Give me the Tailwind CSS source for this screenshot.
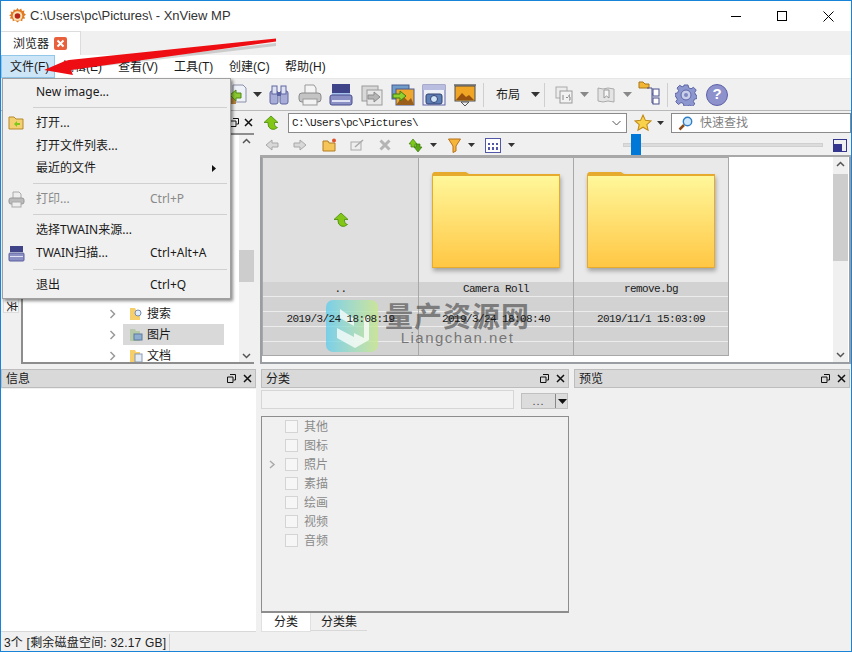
<!DOCTYPE html>
<html lang="zh-CN">
<head>
    <meta charset="UTF-8">
    <title>XnView MP</title>
    <script src="https://cdn.jsdelivr.net/npm/@tailwindcss/browser@4"></script>
</head>
<body class="bg-white overflow-hidden">
<div class="relative w-[852px] h-[652px] overflow-hidden border border-[#1883d7] bg-[#f0f0f0] text-[12px] text-[#1a1a1a] flex flex-col font-['Liberation_Sans','Noto_Sans_CJK_SC',sans-serif]">

    <!-- Title bar -->
    <div class="h-[30px] shrink-0 bg-white flex items-center pl-[8px]">
        <svg class="w-[17px] h-[17px]" viewBox="0 0 17 17"><path d="M8.500 0l1.500 2 2.200-1.500.8 2.400 2.400-.3-.5 2.400 2 1.500-1.800 1.700 1 2.200-2.500.3-.4 2.500-2.300-.9-2.400 2.200-2.400-2.200-2.300.9-.4-2.500-2.500-.3 1-2.200L.1 7.500l2-1.500-.5-2.400 2.400.3.800-2.400L7 2z" fill="#e07a24"/><circle cx="8.500" cy="8" r="4.800" fill="#fbe3b4"/><circle cx="8.500" cy="8" r="2.800" fill="#b8241a"/></svg>
        <span class="ml-[4px] text-[13px] text-[#333]">C:\Users\pc\Pictures\ - XnView MP</span>
        <div class="ml-auto flex items-center">
            <div class="w-[46px] flex justify-center"><div class="w-[10px] h-px bg-black"></div></div>
            <div class="w-[46px] flex justify-center"><div class="w-[10px] h-[10px] border border-black"></div></div>
            <div class="w-[46px] flex justify-center"><svg class="w-[11px] h-[11px]" viewBox="0 0 11 11"><path d="M.5.500l10 10M10.500.500l-10 10" stroke="#000" fill="none"/></svg></div>
        </div>
    </div>

    <!-- Tabs -->
    <div class="h-[24px] shrink-0 flex">
        <div class="w-[80px] bg-white border-t border-r border-[#dcdcdc] flex items-center pl-[12px] gap-[5px]">
            <span class="text-[12px]">浏览器</span>
            <div class="w-[13px] h-[13px] rounded-[2px] bg-[#e8603c] flex items-center justify-center">
                <svg class="w-[9px] h-[9px]" viewBox="0 0 9 9"><path d="M1.500 1.500l6 6M7.500 1.500l-6 6" stroke="#fff" stroke-width="2" fill="none"/></svg>
            </div>
        </div>
    </div>

    <!-- Menu bar -->
    <div class="h-[23px] shrink-0 bg-white flex items-center text-[12px] whitespace-nowrap">
        <div class="w-[54px] h-full bg-[#cde6f7] border border-[#92c7ea] flex items-center pl-[8px]">文件(F)</div>
        <div class="flex ml-[7px]">
            <span class="w-[56px]">编辑(E)</span>
            <span class="w-[56px]">查看(V)</span>
            <span class="w-[55px]">工具(T)</span>
            <span class="w-[56px]">创建(C)</span>
            <span>帮助(H)</span>
        </div>
    </div>

    <!-- Main toolbar -->
    <div class="h-[33px] shrink-0 border-t border-[#e6e6e6] border-b border-b-[#b8b8b8] flex items-center pl-[223px]">
        <svg class="w-[24px] h-[24px]" viewBox="0 0 24 24"><path d="M9 2h10l3 3v14H9z" fill="#eef1f7" stroke="#8a8fa8"/><path d="M1 16l11-3v8H1z" fill="#b7843f"/><path d="M6 12l6-5v3h5v5h-5v3z" fill="#8cc832" stroke="#4f8a12"/></svg>
        <svg class="ml-[5px] w-[9px] h-[5px]" viewBox="0 0 9 5"><path d="M0 0h9L4.500 5z" fill="#333"/></svg>
        <svg class="ml-[5px] w-[24px] h-[24px]" viewBox="0 0 24 24"><rect x="3" y="8" width="8" height="13" rx="2" fill="#a7add6" stroke="#5f65a0"/><rect x="13" y="8" width="8" height="13" rx="2" fill="#a7add6" stroke="#5f65a0"/><rect x="5" y="3" width="5" height="8" fill="#dfe2f2" stroke="#5f65a0"/><rect x="14" y="3" width="5" height="8" fill="#dfe2f2" stroke="#5f65a0"/><rect x="10" y="9" width="4" height="4" fill="#5b62a0"/></svg>
        <svg class="ml-[7px] w-[24px] h-[24px]" viewBox="0 0 24 24"><path d="M7 2h9l2 3v6H7z" fill="#f4f4f4" stroke="#999"/><rect x="1" y="10" width="22" height="9" rx="3" fill="#c4c4c4" stroke="#8a8a8a"/><rect x="5" y="16" width="14" height="6" fill="#f2f2f2" stroke="#999"/></svg>
        <svg class="ml-[7px] w-[24px] h-[24px]" viewBox="0 0 24 24"><path d="M3 1h18v9H3z" fill="#3f4488"/><path d="M3 10h18v2H3z" fill="#a6c3ee"/><rect x="1" y="12" width="22" height="10" rx="2" fill="#8a90c4" stroke="#474c8c"/><rect x="3" y="17" width="18" height="2" fill="#dfe2f4"/></svg>
        <svg class="ml-[7px] w-[24px] h-[24px]" viewBox="0 0 24 24"><rect x="2" y="3" width="16" height="15" fill="#d8d8d8" stroke="#9a9a9a"/><rect x="7" y="7" width="15" height="15" fill="#e8e8e8" stroke="#9a9a9a"/><path d="M8 12h6V9l6 5-6 5v-3H8z" fill="#b5b5b5" stroke="#8c8c8c"/></svg>
        <svg class="ml-[7px] w-[24px] h-[24px]" viewBox="0 0 24 24"><rect x="1" y="2" width="17" height="14" fill="#6f9cc8" stroke="#4a5a90"/><rect x="5" y="6" width="18" height="16" fill="#f0a82c" stroke="#4a5a90"/><path d="M5 22l7-9 5 5 3-3 3 7z" fill="#9a5f1a"/><path d="M2 11h7V8l6 5-6 5v-3H2z" fill="#8fd12f" stroke="#437c10"/></svg>
        <svg class="ml-[7px] w-[24px] h-[24px]" viewBox="0 0 24 24"><rect x="1" y="2" width="22" height="20" fill="#eef0f8" stroke="#6065a8"/><rect x="1" y="2" width="22" height="5" fill="#b9bde0"/><rect x="4" y="11" width="16" height="10" rx="2" fill="#5c7fb8" stroke="#34406f"/><circle cx="12" cy="16" r="3.500" fill="#cfe3f7" stroke="#34406f"/></svg>
        <svg class="ml-[7px] w-[24px] h-[24px]" viewBox="0 0 24 24"><rect x="1" y="1" width="22" height="2" fill="#8a8a8a"/><rect x="2" y="3" width="20" height="15" fill="#f0a525" stroke="#4f4f4f"/><path d="M3 17l6-7 4 4 3-2 5 5z" fill="#99510f"/><path d="M8 19h8l-4 4z" fill="none" stroke="#555"/></svg>
        <div class="ml-[6px] w-px h-[24px] bg-[#cfcfcf]"></div>
        <span class="ml-[12px] text-[12px]">布局</span>
        <svg class="ml-[11px] w-[9px] h-[5px]" viewBox="0 0 9 5"><path d="M0 0h9L4.500 5z" fill="#333"/></svg>
        <div class="ml-[4px] w-px h-[24px] bg-[#cfcfcf]"></div>
        <svg class="ml-[10px] w-[18px] h-[18px]" viewBox="0 0 18 18"><rect x="1" y="1" width="11" height="11" fill="#ececec" stroke="#aaa"/><rect x="5" y="5" width="12" height="12" fill="#f2f2f2" stroke="#999"/><path d="M8 9v5M11 11.500h2M15 9h-1v2h1v3h-1" stroke="#888" fill="none"/></svg>
        <svg class="ml-[7px] w-[9px] h-[5px]" viewBox="0 0 9 5"><path d="M0 0h9L4.500 5z" fill="#888"/></svg>
        <svg class="ml-[8px] w-[18px] h-[18px]" viewBox="0 0 18 18"><path d="M1 2l5 1 5-1 6 1v13l-6-1-5 1-5-1z" fill="#e4e4e4" stroke="#aaa"/><path d="M7 4h5v8l-2.500-2L7 12z" fill="#f6f6f6" stroke="#999"/></svg>
        <svg class="ml-[8px] w-[9px] h-[5px]" viewBox="0 0 9 5"><path d="M0 0h9L4.500 5z" fill="#888"/></svg>
        <svg class="ml-[6px] w-[22px] h-[24px] -mt-[4px]" viewBox="0 0 22 24"><path d="M1 1h4l2 2h4v4H1z" fill="#f2b632" stroke="#a8761a"/><path d="M9 7h5v15h2M14 13h2" fill="none" stroke="#4a4f8c"/><rect x="15" y="8" width="6" height="7" fill="#fff" stroke="#4a4f8c"/><rect x="15" y="17" width="6" height="6" fill="#fff" stroke="#4a4f8c"/></svg>
        <div class="ml-[7px] w-px h-[24px] bg-[#cfcfcf]"></div>
        <svg class="ml-[7px] w-[22px] h-[22px]" viewBox="0 0 22 22"><path d="M9 1h4l.7 2.800 2.300 1 2.500-1.500 2.700 2.700L19.700 8.500l1 2.500L22 11.500v3l-2.600.7-1 2.300 1.400 2.500-2.700 2.700-2.400-1.500-2.500 1H9l-.7-2.700-2.300-1L3.500 20.500.8 17.800l1.500-2.400-1-2.400L0 12.500v-3l2.600-.7 1-2.300L2 4l2.700-2.700 2.400 1.500L9 2z" fill="#8d97cf" stroke="#5d66a6"/><circle cx="11" cy="11" r="5" fill="#c9cfeb" stroke="#5d66a6"/><circle cx="11" cy="11" r="2" fill="#7e88c2"/></svg>
        <div class="ml-[9px] w-[22px] h-[22px] rounded-full bg-[#8d91cc] border border-[#5d62a6] text-white font-bold text-[15px] flex items-center justify-center">?</div>
    </div>

    <!-- Browser area -->
    <div class="h-[253px] shrink-0 flex">
        <!-- Folders pane -->
        <div class="w-[255px] shrink-0 flex">
            <div class="w-[20px] shrink-0 pt-[187px]">
                <div class="w-[16px] h-[15px] ml-[2px] bg-[#f6f6f6] border border-[#dcdcdc] flex items-end justify-center overflow-hidden">
                    <span class="block rotate-90 text-[11px] leading-[11px]">夹</span>
                </div>
            </div>
            <div class="flex-1 flex flex-col">
                <div class="h-[22px] shrink-0 flex items-center justify-end pr-[3px] gap-[5px]">
                    <svg class="w-[9px] h-[9px]" viewBox="0 0 9 9"><path d="M3 .500h5.500V6H6.500M.500 3H6v5.500H.500z" fill="none" stroke="#111"/></svg>
                    <svg class="w-[9px] h-[9px]" viewBox="0 0 9 9"><path d="M1 1l7 7M8 1L1 8" stroke="#111" stroke-width="1.500"/></svg>
                </div>
                <div class="flex-1 min-h-0 mr-[2px] bg-white border-2 border-[#8d8d8d] border-r-0 flex overflow-hidden">
                    <div class="flex-1 flex flex-col justify-end text-[12px] pl-[86px] -mb-[4px]">
                        <div class="h-[21px] shrink-0 flex items-center">
                            <svg class="w-[8px] h-[10px] mr-[12px]" viewBox="0 0 8 10"><path d="M1.500 1l4 4-4 4" fill="none" stroke="#999" stroke-width="1.500"/></svg>
                            <svg class="w-[14px] h-[14px]" viewBox="0 0 14 14"><path d="M1 1h5l1 2h4v10H1z" fill="#f6cf6b"/><circle cx="9" cy="6" r="3" fill="#dfeeff" stroke="#7a8ab0"/></svg>
                            <span class="ml-[4px]">搜索</span>
                        </div>
                        <div class="h-[21px] shrink-0 w-[115px] flex items-center">
                            <svg class="w-[8px] h-[10px] mr-[12px] shrink-0" viewBox="0 0 8 10"><path d="M1.500 1l4 4-4 4" fill="none" stroke="#999" stroke-width="1.500"/></svg>
                            <div class="flex-1 h-full bg-[#d9d9d9] -ml-[6px] pl-[6px] flex items-center">
                                <svg class="w-[14px] h-[14px]" viewBox="0 0 14 14"><path d="M1 1h5l1 2h4v10H1z" fill="#b6c9a8"/><rect x="5" y="6" width="8" height="6" fill="#8eaed0" stroke="#5e7ba0"/></svg>
                                <span class="ml-[4px]">图片</span>
                            </div>
                        </div>
                        <div class="h-[21px] shrink-0 flex items-center">
                            <svg class="w-[8px] h-[10px] mr-[12px]" viewBox="0 0 8 10"><path d="M1.500 1l4 4-4 4" fill="none" stroke="#999" stroke-width="1.500"/></svg>
                            <svg class="w-[14px] h-[14px]" viewBox="0 0 14 14"><path d="M1 1h5l1 2h4v10H1z" fill="#f6cf6b"/><rect x="6" y="5" width="7" height="8" fill="#e4ecf5" stroke="#8a9ab5"/></svg>
                            <span class="ml-[4px]">文档</span>
                        </div>
                    </div>
                    <!-- tree scrollbar -->
                    <div class="w-[15px] shrink-0 bg-[#f0f0f0] flex flex-col justify-between items-center py-[3px] relative">
                        <svg class="w-[9px] h-[6px]" viewBox="0 0 9 6"><path d="M1 5l3.500-3.500L8 5" fill="none" stroke="#555" stroke-width="1.500"/></svg>
                        <svg class="w-[9px] h-[6px]" viewBox="0 0 9 6"><path d="M1 1l3.500 3.500L8 1" fill="none" stroke="#555" stroke-width="1.500"/></svg>
                        <div class="absolute left-0 top-[115px] w-full h-[32px] bg-[#cdcdcd]"></div>
                    </div>
                </div>
            </div>
        </div>

        <!-- Files pane -->
        <div class="flex-1 ml-[4px] flex flex-col min-w-0">
            <!-- Address row -->
            <div class="h-[24px] shrink-0 flex items-center">
                <svg class="w-[16px] h-[16px] ml-[3px]" viewBox="0 0 16 16"><path d="M8 1l7 6.500h-3.500V9q0 3 3 3.500-3 3-6.500 1.500-3-1.500-3-5V7.500H1z" fill="#82c616" stroke="#4a8a0c" stroke-width=".8"/></svg>
                <div class="ml-[9px] w-[339px] h-[20px] bg-white border border-[#8a8a8a] flex items-center pl-[3px] font-['Liberation_Mono','Noto_Sans_CJK_SC',monospace] text-[11px] tracking-[-0.6px]">C:\Users\pc\Pictures\<svg class="ml-auto mr-[5px] w-[9px] h-[6px]" viewBox="0 0 9 6"><path d="M.500 1l4 4 4-4" fill="none" stroke="#555"/></svg></div>
                <svg class="ml-[7px] w-[18px] h-[18px]" viewBox="0 0 17 17"><path d="M8.500 1l2.300 5 5.200.5-3.900 3.500 1.200 5.300-4.800-2.800-4.800 2.800L4.900 10 1 6.500 6.200 6z" fill="#f9d24a" stroke="#c08a1c"/></svg>
                <svg class="ml-[5px] w-[7px] h-[4px]" viewBox="0 0 7 4"><path d="M0 0h7L3.500 4z" fill="#333"/></svg>
                <div class="ml-[7px] w-[180px] h-[20px] bg-white border border-[#8a8a8a] flex items-center pl-[6px]">
                    <svg class="w-[15px] h-[15px]" viewBox="0 0 15 15"><circle cx="9.500" cy="5.500" r="4.200" fill="#cfe8fb" stroke="#2f7fc4" stroke-width="1.400"/><path d="M6 9l-4.500 4.500" stroke="#8a4a1a" stroke-width="2.500"/></svg>
                    <span class="ml-[7px] text-[#808080] text-[12px]">快速查找</span>
                </div>
            </div>
            <!-- Second toolbar -->
            <div class="h-[22px] shrink-0 flex items-center border-b-2 border-[#a8a8a8]">
                <svg class="w-[14px] h-[12px] ml-[5px]" viewBox="0 0 14 12"><path d="M1 6l6-5v3h6v4H7v3z" fill="#d8d8d8" stroke="#a8a8a8"/></svg>
                <svg class="w-[14px] h-[12px] ml-[14px]" viewBox="0 0 14 12"><path d="M13 6L7 1v3H1v4h6v3z" fill="#d8d8d8" stroke="#a8a8a8"/></svg>
                <svg class="w-[15px] h-[14px] ml-[15px]" viewBox="0 0 15 14"><path d="M1 3h5l1 2h6v8H1z" fill="#f5c55a" stroke="#b37d1f"/><circle cx="12" cy="2.500" r="2" fill="#e0522a"/></svg>
                <svg class="w-[15px] h-[12px] ml-[13px]" viewBox="0 0 15 12"><rect x="1" y="3" width="10" height="8" fill="#eee" stroke="#aaa"/><path d="M5 8l8-7" stroke="#aaa" stroke-width="1.500"/></svg>
                <svg class="w-[12px] h-[12px] ml-[14px]" viewBox="0 0 12 12"><path d="M1.500 1.500l9 9M10.500 1.500l-9 9" stroke="#b4b4b4" stroke-width="3"/></svg>
                <svg class="w-[15px] h-[15px] ml-[17px]" viewBox="0 0 15 15"><path d="M5 1l4 5H7v3H3V6H1z" fill="#7ec81c" stroke="#3e7d0e" stroke-width=".7"/><path d="M10 14L6 9h2V6h4v3h2z" fill="#5aa614" stroke="#3e7d0e" stroke-width=".7"/></svg>
                <svg class="ml-[7px] w-[7px] h-[4px]" viewBox="0 0 7 4"><path d="M0 0h7L3.500 4z" fill="#333"/></svg>
                <svg class="w-[13px] h-[15px] ml-[11px]" viewBox="0 0 13 15"><path d="M.500 1h12L8 8v5l-3 1.500V8z" fill="#f5b63a" stroke="#b9701a"/></svg>
                <svg class="ml-[7px] w-[7px] h-[4px]" viewBox="0 0 7 4"><path d="M0 0h7L3.500 4z" fill="#333"/></svg>
                <div class="ml-[10px] w-[16px] h-[15px] border border-[#5257a8] bg-white grid grid-cols-3 gap-[2px] p-[2px] pt-[4px]">
                    <div class="bg-[#5257a8]"></div><div class="bg-[#5257a8]"></div><div class="bg-[#5257a8]"></div>
                    <div class="bg-[#5257a8]"></div><div class="bg-[#5257a8]"></div><div class="bg-[#5257a8]"></div>
                </div>
                <svg class="ml-[7px] w-[7px] h-[4px]" viewBox="0 0 7 4"><path d="M0 0h7L3.500 4z" fill="#333"/></svg>
                <!-- zoom slider -->
                <div class="ml-[108px] w-[200px] h-[4px] bg-[#dcdcdc] border border-[#d0d0d0] relative">
                    <div class="absolute left-[7px] -top-[10px] w-[10px] h-[21px] bg-[#0078d7]"></div>
                </div>
                <div class="ml-[10px] w-[14px] h-[13px] border border-[#33358f] relative">
                    <div class="absolute left-0 bottom-0 w-[8px] h-[7px] bg-[#33358f]"></div>
                </div>
            </div>
            <!-- Thumbnails -->
            <div class="flex-1 min-h-0 bg-white flex border-2 border-t-0 border-[#9a9ea2]">
                <div class="flex-1 flex items-start overflow-hidden">
                    <div class="w-[156px] h-[199px] bg-[#dfdfdf] border border-[#a8a8a8] border-r-0 flex flex-col">
                        <div class="h-[124px] flex items-center justify-center">
                            <svg class="w-[16px] h-[16px]" viewBox="0 0 16 16"><path d="M8 1l7 6.500h-3.500V9q0 3 3 3.500-3 3-6.500 1.500-3-1.500-3-5V7.500H1z" fill="#82c616" stroke="#4a8a0c" stroke-width=".8"/></svg>
                        </div>
                        <div class="flex-1 flex flex-col text-center font-['Liberation_Mono',monospace] text-[11px] tracking-[-0.6px] bg-[#d2d2d2] divide-y divide-[#ececec]">
                            <div class="h-[15px] leading-[15px]">..</div>
                            <div class="h-[15px]"></div>
                            <div class="h-[15px] leading-[15px]"><span class="relative z-[1]">2019/3/24 18:08:19</span></div>
                            <div class="h-[15px]"></div>
                            <div class="flex-1"></div>
                        </div>
                    </div>
                    <div class="w-[155px] h-[199px] bg-[#e9e9e9] border border-[#a8a8a8] border-r-0 flex flex-col">
                        <div class="h-[124px] pt-[13px] pl-[13px]">
                            <svg class="w-[128px] h-[97px] drop-shadow-[1px_3px_2px_rgba(0,0,0,0.3)]" viewBox="0 0 128 97"><defs><linearGradient id="f1" x1="0" y1="0" x2="0" y2="1"><stop offset="0" stop-color="#fff79a"/><stop offset="1" stop-color="#ffc744"/></linearGradient></defs><path d="M0 4q0-2 2-3h32l3 2h91v94H0z" fill="#e6ab2c"/><rect x="1" y="5" width="126" height="91" fill="url(#f1)"/></svg>
                        </div>
                        <div class="flex-1 flex flex-col text-center font-['Liberation_Mono',monospace] text-[11px] tracking-[-0.6px] bg-[#d2d2d2] divide-y divide-[#ececec]">
                            <div class="h-[15px] leading-[15px]">Camera Roll</div>
                            <div class="h-[15px]"></div>
                            <div class="h-[15px] leading-[15px]"><span class="relative z-[1]">2019/3/24 18:08:40</span></div>
                            <div class="h-[15px]"></div>
                            <div class="flex-1"></div>
                        </div>
                    </div>
                    <div class="w-[156px] h-[199px] bg-[#e9e9e9] border border-[#a8a8a8] flex flex-col">
                        <div class="h-[124px] pt-[13px] pl-[13px]">
                            <svg class="w-[128px] h-[97px] drop-shadow-[1px_3px_2px_rgba(0,0,0,0.3)]" viewBox="0 0 128 97"><defs><linearGradient id="f2" x1="0" y1="0" x2="0" y2="1"><stop offset="0" stop-color="#fff79a"/><stop offset="1" stop-color="#ffc744"/></linearGradient></defs><path d="M0 4q0-2 2-3h32l3 2h91v94H0z" fill="#e6ab2c"/><rect x="1" y="5" width="126" height="91" fill="url(#f2)"/></svg>
                        </div>
                        <div class="flex-1 flex flex-col text-center font-['Liberation_Mono',monospace] text-[11px] tracking-[-0.6px] bg-[#d2d2d2] divide-y divide-[#ececec]">
                            <div class="h-[15px] leading-[15px]">remove.bg</div>
                            <div class="h-[15px]"></div>
                            <div class="h-[15px] leading-[15px]">2019/11/1 15:03:09</div>
                            <div class="h-[15px]"></div>
                            <div class="flex-1"></div>
                        </div>
                    </div>
                </div>
                <!-- thumbs scrollbar -->
                <div class="w-[15px] shrink-0 bg-[#f0f0f0] flex flex-col justify-between items-center py-[4px] mr-[1px] relative">
                    <svg class="w-[9px] h-[6px]" viewBox="0 0 9 6"><path d="M1 5l3.500-3.500L8 5" fill="none" stroke="#555" stroke-width="1.500"/></svg>
                    <svg class="w-[9px] h-[6px]" viewBox="0 0 9 6"><path d="M1 1l3.500 3.500L8 1" fill="none" stroke="#555" stroke-width="1.500"/></svg>
                    <div class="absolute left-0 top-[17px] w-full h-[87px] bg-[#cdcdcd]"></div>
                </div>
            </div>
        </div>
    </div>

    <!-- Dock panels -->
    <div class="flex-1 min-h-0 pt-[5px] pb-[19px] flex">
        <!-- Info -->
        <div class="w-[255px] shrink-0 flex flex-col">
            <div class="h-[19px] shrink-0 bg-[#d9d9d9] border border-[#bdbdbd] flex items-center pl-[4px] pr-[3px] text-[12px]">信息
                <svg class="ml-auto w-[9px] h-[9px]" viewBox="0 0 9 9"><path d="M3 .500h5.500V6H6.500M.500 3H6v5.500H.500z" fill="none" stroke="#111"/></svg>
                <svg class="ml-[7px] w-[9px] h-[9px]" viewBox="0 0 9 9"><path d="M1 1l7 7M8 1L1 8" stroke="#111" stroke-width="1.500"/></svg>
            </div>
            <div class="flex-1 bg-white border-b border-[#d8d8d8] mt-px"></div>
        </div>
        <!-- Categories -->
        <div class="w-[308px] ml-[5px] shrink-0 flex flex-col">
            <div class="h-[19px] shrink-0 bg-[#d9d9d9] border border-[#bdbdbd] flex items-center pl-[4px] pr-[3px] text-[12px]">分类
                <svg class="ml-auto w-[9px] h-[9px]" viewBox="0 0 9 9"><path d="M3 .500h5.500V6H6.500M.500 3H6v5.500H.500z" fill="none" stroke="#111"/></svg>
                <svg class="ml-[7px] w-[9px] h-[9px]" viewBox="0 0 9 9"><path d="M1 1l7 7M8 1L1 8" stroke="#111" stroke-width="1.500"/></svg>
            </div>
            <div class="h-[19px] mt-[2px] shrink-0 flex items-end">
                <div class="w-[253px] h-[19px] bg-[#f2f2f2] border border-[#d6d6d6]"></div>
                <div class="ml-[7px] w-[47px] h-[16px] bg-[#dcdcdc] border border-[#c0c0c0] flex items-center text-[11px] text-[#444]">
                    <span class="w-[33px] text-center tracking-[1px]">...</span>
                    <div class="w-px h-full bg-[#888]"></div>
                    <svg class="ml-[2px] w-[9px] h-[5px]" viewBox="0 0 9 5"><path d="M0 0h9L4.500 5z" fill="#111"/></svg>
                </div>
            </div>
            <div class="flex-1 min-h-0 mt-[7px] border border-[#8d8d8d] border-b-2 flex flex-col text-[#8a8a8a] text-[12px]">
                <div class="h-[19px] flex items-center pl-[23px] gap-[6px]"><div class="w-[13px] h-[13px] bg-[#f6f6f6] border border-[#d4d4d4]"></div>其他</div>
                <div class="h-[19px] flex items-center pl-[23px] gap-[6px]"><div class="w-[13px] h-[13px] bg-[#f6f6f6] border border-[#d4d4d4]"></div>图标</div>
                <div class="h-[19px] flex items-center pl-[7px] gap-[6px]"><svg class="w-[7px] h-[9px] mr-[3px]" viewBox="0 0 7 9"><path d="M1 1l4 3.500L1 8" fill="none" stroke="#aaa" stroke-width="1.500"/></svg><div class="w-[13px] h-[13px] bg-[#f6f6f6] border border-[#d4d4d4]"></div>照片</div>
                <div class="h-[19px] flex items-center pl-[23px] gap-[6px]"><div class="w-[13px] h-[13px] bg-[#f6f6f6] border border-[#d4d4d4]"></div>素描</div>
                <div class="h-[19px] flex items-center pl-[23px] gap-[6px]"><div class="w-[13px] h-[13px] bg-[#f6f6f6] border border-[#d4d4d4]"></div>绘画</div>
                <div class="h-[19px] flex items-center pl-[23px] gap-[6px]"><div class="w-[13px] h-[13px] bg-[#f6f6f6] border border-[#d4d4d4]"></div>视频</div>
                <div class="h-[19px] flex items-center pl-[23px] gap-[6px]"><div class="w-[13px] h-[13px] bg-[#f6f6f6] border border-[#d4d4d4]"></div>音频</div>
            </div>
            <div class="h-[19px] shrink-0 flex text-[12px]">
                <div class="w-[50px] h-[19px] bg-white border border-[#e0e0e0] border-t-0 flex items-center justify-center">分类</div>
                <div class="w-[56px] h-[18px] border-b border-[#d8d8d8] flex items-center justify-center">分类集</div>
            </div>
        </div>
        <!-- Preview -->
        <div class="flex-1 ml-[5px] mr-[1px]">
            <div class="h-[19px] bg-[#d9d9d9] border border-[#bdbdbd] flex items-center pl-[4px] pr-[3px] text-[12px]">预览
                <svg class="ml-auto w-[9px] h-[9px]" viewBox="0 0 9 9"><path d="M3 .500h5.500V6H6.500M.500 3H6v5.500H.500z" fill="none" stroke="#111"/></svg>
                <svg class="ml-[7px] w-[9px] h-[9px]" viewBox="0 0 9 9"><path d="M1 1l7 7M8 1L1 8" stroke="#111" stroke-width="1.500"/></svg>
            </div>
        </div>
    </div>

    <!-- Status text -->
    <div class="absolute left-[3px] bottom-0 h-[17px] w-[166px] border-r border-[#cfcfcf] flex items-center text-[12px] text-[#222] tracking-[0.2px] whitespace-nowrap">3个 [剩余磁盘空间: 32.17 GB]</div>

    <!-- File menu dropdown -->
    <div class="absolute left-[1px] top-[77px] w-[229px] h-[221px] bg-[#f0f0f0] border border-[#a0a0a0] shadow-[2px_2px_3px_rgba(0,0,0,0.45)] pt-[2px] text-[12px] z-10 font-['Noto_Sans','Noto_Sans_CJK_SC',sans-serif]">
        <div class="h-[22.500px] pl-[33px] flex items-center">New image...</div>
        <div class="h-px bg-[#d0d0d0] ml-[30px] mr-[3px] my-[3.750px]"></div>
        <div class="h-[22.500px] pl-[33px] flex items-center relative">打开...
            <svg class="absolute left-[5px] top-[4px] w-[16px] h-[14px]" viewBox="0 0 16 14"><path d="M1 1h5l2 2h7v10H1z" fill="#f3d070" stroke="#b5892a"/><path d="M6 8l3-3v2h3v2H9v2z" fill="#7ec81c"/></svg>
        </div>
        <div class="h-[22.500px] pl-[33px] flex items-center">打开文件列表...</div>
        <div class="h-[22.500px] pl-[33px] pr-[14px] flex items-center justify-between">最近的文件<svg class="w-[4px] h-[7px]" viewBox="0 0 4 7"><path d="M0 0l4 3.500L0 7z" fill="#111"/></svg></div>
        <div class="h-px bg-[#d0d0d0] ml-[30px] mr-[3px] my-[3.750px]"></div>
        <div class="h-[22.500px] pl-[33px] flex items-center text-[#8a8a8a] relative"><span class="w-[114px]">打印...</span>Ctrl+P
            <svg class="absolute left-[5px] top-[3px] w-[17px] h-[17px]" viewBox="0 0 17 17"><path d="M5 1h6l2 2v5H5z" fill="#eee" stroke="#aaa"/><rect x="1" y="7" width="15" height="6" rx="2" fill="#bbb" stroke="#999"/><rect x="4" y="11" width="9" height="5" fill="#eee" stroke="#aaa"/></svg>
        </div>
        <div class="h-px bg-[#d0d0d0] ml-[30px] mr-[3px] my-[3.750px]"></div>
        <div class="h-[22.500px] pl-[33px] flex items-center">选择TWAIN来源...</div>
        <div class="h-[22.500px] pl-[33px] flex items-center relative"><span class="w-[114px]">TWAIN扫描...</span>Ctrl+Alt+A
            <svg class="absolute left-[5px] top-[3px] w-[17px] h-[17px]" viewBox="0 0 17 17"><path d="M2 1h13v6H2z" fill="#3f4488"/><rect x="1" y="8" width="15" height="8" rx="1" fill="#8a90c4" stroke="#5a5f9c"/><rect x="2" y="11" width="13" height="1" fill="#e0e2f4"/></svg>
        </div>
        <div class="h-px bg-[#d0d0d0] ml-[30px] mr-[3px] mt-[5px] mb-[4px]"></div>
        <div class="h-[22.500px] pl-[33px] flex items-center"><span class="w-[114px]">退出</span>Ctrl+Q</div>
    </div>

    <!-- Red annotation arrow -->
    <svg class="absolute left-0 top-0 z-20 pointer-events-none" width="852" height="652" viewBox="0 0 852 652">
        <path d="M274 39L76 62l1 3 197-23z" fill="#000" opacity=".15" transform="translate(1 3)"/>
        <path d="M275 37.500L68 59l-4 1-21 9 29 5-2-5L275 40.500z" fill="#ee0d12"/>
    </svg>

    <!-- Watermark -->
    <div class="absolute left-[325px] top-[299px] z-0 flex items-center">
        <div class="w-[52px] h-[52px] rounded-[7px] bg-gradient-to-r from-[#52cdf0]/70 to-[#c8e88c]/80 flex items-center justify-center">
            <svg class="w-[36px] h-[44px]" viewBox="0 0 36 44"><path d="M6 5l14 10v14l10 5V14l5-2v24l-14 8L3 34V24l17 9V22L6 14z" fill="#fff" opacity=".75"/></svg>
        </div>
        <div class="ml-[7px] flex flex-col items-center">
            <span class="h-[24px] text-[28px] leading-[24px] font-bold text-[#555]/70 tracking-[1px] whitespace-nowrap">量产资源网</span>
            <span class="h-[16px] text-[15px] leading-[16px] text-[#555]/75 tracking-[1.500px]">Liangchan.net</span>
        </div>
    </div>
</div>
</body>
</html>
